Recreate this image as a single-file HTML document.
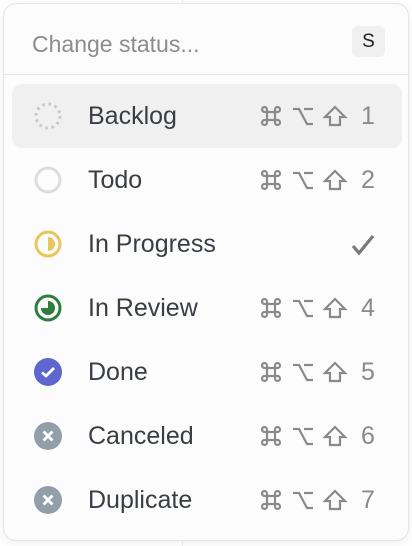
<!DOCTYPE html>
<html><head><meta charset="utf-8"><style>
html,body{margin:0;padding:0;width:412px;height:546px;background:#fff;overflow:hidden;font-family:"Liberation Sans","DejaVu Sans",sans-serif}
.bg{position:absolute;left:182px;top:0;width:1px;height:546px;background:#eee}
.panel{position:absolute;left:3px;top:3px;width:404px;height:536px;border:1px solid #e4e4e4;border-radius:13px;background:#fcfcfc;box-shadow:0 3px 12px rgba(0,0,0,.06)}
.hdr{position:absolute;left:28px;top:27px;font-size:23px;color:#8c8c8c}
.kbd{position:absolute;left:348px;top:22px;width:33px;height:31px;border-radius:6px;background:#f0f0f0;font-size:19px;color:#222;text-align:center;line-height:31px}
.div{position:absolute;left:0;top:70px;width:404px;height:1px;background:#e6e6e6}
.row{position:absolute;left:8px;width:390px;height:64px}
.row.sel{background:#f0f0f0;border-radius:10px}
.ic{position:absolute;left:22px;top:18px}
.lb{position:absolute;left:76px;top:18px;font-size:25px;color:#3a3d45}
.sc{position:absolute;left:248px;top:21px}
.dg{position:absolute;left:349px;top:18px;font-size:25px;color:#8a8a8a}
</style></head><body>
<div class="bg"></div>
<svg width="0" height="0" style="position:absolute"><defs>
<g id="keys" fill="none" stroke="#8a8a8a" stroke-width="2.2">
<path d="M7 7 H15 V15 H7 Z M7 7 V4.5 A2.5 2.5 0 1 0 4.5 7 H7 M15 7 V4.5 A2.5 2.5 0 1 1 17.5 7 H15 M7 15 V17.5 A2.5 2.5 0 1 1 4.5 15 H7 M15 15 V17.5 A2.5 2.5 0 1 0 17.5 15 H15"/>
<path d="M33 4 H39 L47 19 H53 M44 4 H53"/>
<path d="M75 2 L65 12 H70 V20 H80 V12 H85 Z"/>
</g></defs></svg>

<div class="panel">
<div class="hdr">Change status...</div>
<div class="kbd">S</div>
<div class="div"></div>

<div class="row sel" style="top:80px"><svg class="ic" width="28" height="28" viewBox="0 0 28 28"><circle cx="14" cy="14" r="12" fill="none" stroke="#c8c8cc" stroke-width="3" stroke-dasharray="2.6 3.7"/></svg><div class="lb">Backlog</div><svg class="sc" width="90" height="24"><use href="#keys"/></svg><div class="dg">1</div></div>

<div class="row" style="top:144px"><svg class="ic" width="28" height="28" viewBox="0 0 28 28"><circle cx="14" cy="14" r="12" fill="none" stroke="#dedede" stroke-width="3"/></svg><div class="lb">Todo</div><svg class="sc" width="90" height="24"><use href="#keys"/></svg><div class="dg">2</div></div>

<div class="row" style="top:208px"><svg class="ic" width="28" height="28" viewBox="0 0 28 28"><circle cx="14" cy="14" r="12" fill="none" stroke="#e8c65a" stroke-width="3"/><path d="M14 7 A7 7 0 0 1 14 21 Z" fill="#e8c65a"/></svg><div class="lb">In Progress</div><svg style="position:absolute;left:338px;top:22px" width="26" height="22" viewBox="0 0 26 22"><path d="M3 12 L9 19 L23 2" fill="none" stroke="#7a7a7a" stroke-width="3.2"/></svg></div>

<div class="row" style="top:272px"><svg class="ic" width="28" height="28" viewBox="0 0 28 28"><circle cx="14" cy="14" r="12" fill="none" stroke="#2e7d40" stroke-width="3"/><path d="M14 7 A7 7 0 1 1 7 14 L14 14 Z" fill="#2e7d40"/></svg><div class="lb">In Review</div><svg class="sc" width="90" height="24"><use href="#keys"/></svg><div class="dg">4</div></div>

<div class="row" style="top:336px"><svg class="ic" width="28" height="28" viewBox="0 0 28 28"><circle cx="14" cy="14" r="14" fill="#5e67d0"/><path d="M8 14.5 L12 18 L20 10" fill="none" stroke="#fff" stroke-width="2.8"/></svg><div class="lb">Done</div><svg class="sc" width="90" height="24"><use href="#keys"/></svg><div class="dg">5</div></div>

<div class="row" style="top:400px"><svg class="ic" width="28" height="28" viewBox="0 0 28 28"><circle cx="14" cy="14" r="14" fill="#939eab"/><path d="M9.5 9.5 L18.5 18.5 M18.5 9.5 L9.5 18.5" stroke="#fff" stroke-width="2.8"/></svg><div class="lb">Canceled</div><svg class="sc" width="90" height="24"><use href="#keys"/></svg><div class="dg">6</div></div>

<div class="row" style="top:464px"><svg class="ic" width="28" height="28" viewBox="0 0 28 28"><circle cx="14" cy="14" r="14" fill="#939eab"/><path d="M9.5 9.5 L18.5 18.5 M18.5 9.5 L9.5 18.5" stroke="#fff" stroke-width="2.8"/></svg><div class="lb">Duplicate</div><svg class="sc" width="90" height="24"><use href="#keys"/></svg><div class="dg">7</div></div>
</div>
</body></html>
